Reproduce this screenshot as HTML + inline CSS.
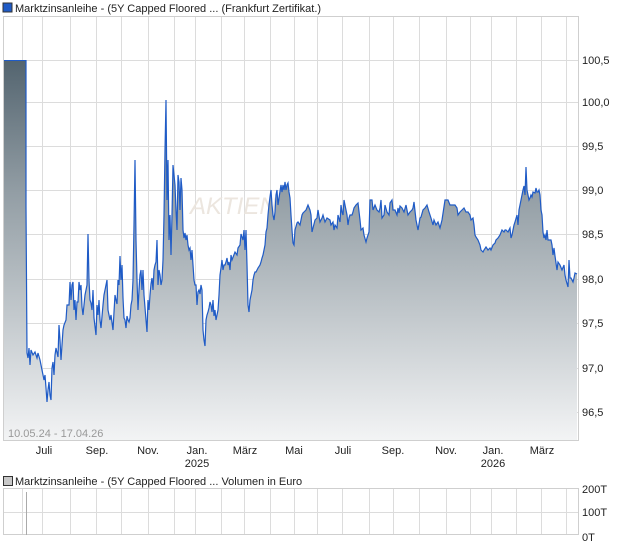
<!DOCTYPE html>
<html><head><meta charset="utf-8"><style>
html,body{margin:0;padding:0;background:#fff;}
body{width:620px;height:546px;overflow:hidden;font-family:"Liberation Sans",sans-serif;}
svg{display:block}
</style></head><body>
<svg width="620" height="546" viewBox="0 0 620 546" xmlns="http://www.w3.org/2000/svg" font-family="Liberation Sans, sans-serif">
<defs>
<linearGradient id="g" x1="0" y1="60" x2="0" y2="441" gradientUnits="userSpaceOnUse">
<stop offset="0" stop-color="#53646f"/>
<stop offset="0.35" stop-color="#939ea5"/>
<stop offset="1" stop-color="#f3f4f5"/>
</linearGradient>
</defs>
<rect x="3" y="3" width="9" height="9" fill="#1f5bc6" stroke="#333" stroke-width="1"/>
<text x="15" y="12" font-size="11" fill="#222">Marktzinsanleihe - (5Y Capped Floored ... (Frankfurt Zertifikat.)</text>
<g stroke="#dcdcdc" stroke-width="1">
<line x1="22.5" y1="16" x2="22.5" y2="441"/><line x1="42.5" y1="16" x2="42.5" y2="441"/><line x1="70.5" y1="16" x2="70.5" y2="441"/><line x1="96.5" y1="16" x2="96.5" y2="441"/><line x1="121.5" y1="16" x2="121.5" y2="441"/><line x1="148.5" y1="16" x2="148.5" y2="441"/><line x1="174.5" y1="16" x2="174.5" y2="441"/><line x1="195.5" y1="16" x2="195.5" y2="441"/><line x1="221.5" y1="16" x2="221.5" y2="441"/><line x1="244.5" y1="16" x2="244.5" y2="441"/><line x1="270.5" y1="16" x2="270.5" y2="441"/><line x1="294.5" y1="16" x2="294.5" y2="441"/><line x1="317.5" y1="16" x2="317.5" y2="441"/><line x1="342.5" y1="16" x2="342.5" y2="441"/><line x1="369.5" y1="16" x2="369.5" y2="441"/><line x1="393.5" y1="16" x2="393.5" y2="441"/><line x1="419.5" y1="16" x2="419.5" y2="441"/><line x1="446.5" y1="16" x2="446.5" y2="441"/><line x1="470.5" y1="16" x2="470.5" y2="441"/><line x1="491.5" y1="16" x2="491.5" y2="441"/><line x1="516.5" y1="16" x2="516.5" y2="441"/><line x1="541.5" y1="16" x2="541.5" y2="441"/><line x1="566.5" y1="16" x2="566.5" y2="441"/>
<line x1="3" y1="60.5" x2="578" y2="60.5"/><line x1="3" y1="102.5" x2="578" y2="102.5"/><line x1="3" y1="146.5" x2="578" y2="146.5"/><line x1="3" y1="190.5" x2="578" y2="190.5"/><line x1="3" y1="234.5" x2="578" y2="234.5"/><line x1="3" y1="279.5" x2="578" y2="279.5"/><line x1="3" y1="323.5" x2="578" y2="323.5"/><line x1="3" y1="368.5" x2="578" y2="368.5"/><line x1="3" y1="412.5" x2="578" y2="412.5"/>
</g>
<text x="190" y="214" font-size="24" fill="#ece6df" font-style="italic">AKTIEN</text>
<path id="p" fill="url(#g)" d="M3,441 L3,60 L26,60 L26,206 L27,353 L28,358 L29,348 L30,365 L31,350 L33,355 L35,352 L37,358 L38,353 L40,360 L41,365 L43,375 L44,380 L45,375 L46,388 L47,402 L48,390 L49,382 L50,395 L51,400 L52,368 L53,362 L54,375 L55,355 L56,348 L58,357 L59,325 L60,340 L61,360 L62,345 L63,330 L64,325 L66,320 L67,305 L69,305 L70,282 L71,300 L72,285 L73,282 L74,310 L75,300 L76,320 L77,302 L78,302 L79,282 L80,290 L81,285 L82,307 L83,315 L85,295 L86,290 L87,285 L88,234 L89,280 L90,300 L91,303 L92,310 L93,290 L94,318 L96,335 L97,305 L98,315 L99,300 L100,320 L101,328 L103,305 L104,295 L105,290 L106,285 L107,280 L108,310 L110,320 L111,315 L113,330 L114,312 L115,295 L116,300 L117,304 L118,280 L119,285 L120,256 L121,280 L122,265 L123,298 L124,318 L125,320 L126,328 L127,316 L128,320 L129,322 L130,318 L131,305 L132,300 L133,280 L134,225 L135,160 L136,240 L137,280 L138,310 L139,290 L140,275 L141,270 L142,290 L143,270 L144,295 L146,320 L147,332 L148,300 L149,310 L150,295 L151,284 L152,278 L153,290 L154,270 L155,265 L156,262 L157,240 L158,285 L159,270 L160,275 L161,285 L162,280 L163,260 L164,215 L165,150 L166,100 L167,200 L168,160 L169,240 L170,215 L171,255 L172,215 L173,165 L174,175 L175,185 L176,210 L177,230 L178,175 L179,182 L180,210 L181,178 L182,190 L183,230 L184,238 L185,233 L186,240 L187,235 L188,245 L189,250 L190,248 L191,260 L192,250 L193,265 L194,280 L195,285 L196,285 L197,305 L198,292 L199,290 L200,294 L201,285 L202,290 L203,330 L204,340 L205,346 L206,320 L207,315 L208,312 L209,308 L210,302 L211,305 L212,312 L213,300 L214,316 L215,310 L216,320 L217,315 L218,310 L219,295 L220,275 L221,268 L222,260 L223,270 L224,265 L225,265 L226,262 L227,258 L228,265 L229,262 L230,270 L231,255 L232,260 L235,252 L237,255 L238,248 L240,245 L241,234 L243,240 L244,230 L245,250 L246,230 L247,265 L248,305 L249,312 L250,300 L251,295 L252,290 L253,280 L254,275 L255,272 L256,272 L258,268 L260,265 L261,262 L262,258 L263,255 L264,250 L265,245 L266,232 L267,228 L268,215 L269,205 L270,197 L271,190 L272,205 L273,215 L274,220 L275,212 L276,195 L277,190 L278,205 L279,198 L281,185 L282,192 L283,185 L284,190 L285,182 L286,190 L287,185 L288,183 L289,192 L290,198 L291,215 L292,230 L293,243 L294,245 L295,230 L297,223 L298,222 L300,225 L302,215 L303,213 L304,212 L306,210 L308,205 L310,210 L311,215 L312,232 L313,228 L315,220 L317,218 L318,210 L320,222 L322,218 L323,215 L325,222 L326,220 L327,218 L330,220 L331,225 L333,222 L334,230 L335,225 L337,228 L338,215 L340,222 L341,205 L342,212 L343,215 L344,200 L346,210 L347,215 L348,225 L349,218 L350,215 L352,215 L353,212 L354,208 L356,205 L358,203 L360,220 L361,230 L363,228 L364,235 L366,242 L367,238 L369,232 L370,200 L372,200 L373,210 L375,205 L377,210 L379,212 L380,208 L381,200 L382,218 L384,215 L385,205 L387,212 L389,215 L390,203 L392,200 L393,210 L395,210 L397,215 L398,208 L399,213 L400,206 L402,208 L404,212 L406,205 L408,215 L410,212 L412,210 L413,208 L414,202 L416,220 L418,230 L420,218 L421,217 L423,210 L425,208 L427,205 L429,212 L431,218 L433,225 L434,220 L436,225 L438,222 L440,228 L442,220 L445,200 L448,200 L450,205 L453,205 L455,205 L457,208 L458,215 L460,212 L462,210 L464,208 L466,212 L468,212 L470,215 L471,220 L473,218 L474,225 L475,235 L476,237 L478,240 L480,245 L481,250 L483,252 L484,250 L486,247 L488,250 L490,248 L491,250 L493,245 L495,243 L496,240 L498,238 L500,235 L502,230 L504,232 L505,230 L506,230 L508,232 L510,228 L511,238 L512,235 L514,225 L515,222 L517,215 L518,225 L519,210 L520,205 L521,200 L522,195 L523,190 L524,186 L525,195 L526,167 L527,190 L528,195 L529,200 L530,198 L531,195 L532,197 L533,192 L535,193 L536,188 L537,192 L538,192 L539,190 L540,195 L541,210 L542,215 L543,232 L544,238 L545,235 L546,240 L547,230 L548,240 L549,240 L551,240 L552,245 L553,255 L554,248 L555,256 L557,270 L558,262 L560,265 L562,270 L564,265 L565,275 L566,280 L568,287 L569,260 L570,278 L571,278 L573,282 L574,278 L575,273 L577,274 L577,441 Z"/>
<path fill="none" stroke="#1f5bc6" stroke-width="1.2" d="M26,60 L26,206 L27,353 L28,358 L29,348 L30,365 L31,350 L33,355 L35,352 L37,358 L38,353 L40,360 L41,365 L43,375 L44,380 L45,375 L46,388 L47,402 L48,390 L49,382 L50,395 L51,400 L52,368 L53,362 L54,375 L55,355 L56,348 L58,357 L59,325 L60,340 L61,360 L62,345 L63,330 L64,325 L66,320 L67,305 L69,305 L70,282 L71,300 L72,285 L73,282 L74,310 L75,300 L76,320 L77,302 L78,302 L79,282 L80,290 L81,285 L82,307 L83,315 L85,295 L86,290 L87,285 L88,234 L89,280 L90,300 L91,303 L92,310 L93,290 L94,318 L96,335 L97,305 L98,315 L99,300 L100,320 L101,328 L103,305 L104,295 L105,290 L106,285 L107,280 L108,310 L110,320 L111,315 L113,330 L114,312 L115,295 L116,300 L117,304 L118,280 L119,285 L120,256 L121,280 L122,265 L123,298 L124,318 L125,320 L126,328 L127,316 L128,320 L129,322 L130,318 L131,305 L132,300 L133,280 L134,225 L135,160 L136,240 L137,280 L138,310 L139,290 L140,275 L141,270 L142,290 L143,270 L144,295 L146,320 L147,332 L148,300 L149,310 L150,295 L151,284 L152,278 L153,290 L154,270 L155,265 L156,262 L157,240 L158,285 L159,270 L160,275 L161,285 L162,280 L163,260 L164,215 L165,150 L166,100 L167,200 L168,160 L169,240 L170,215 L171,255 L172,215 L173,165 L174,175 L175,185 L176,210 L177,230 L178,175 L179,182 L180,210 L181,178 L182,190 L183,230 L184,238 L185,233 L186,240 L187,235 L188,245 L189,250 L190,248 L191,260 L192,250 L193,265 L194,280 L195,285 L196,285 L197,305 L198,292 L199,290 L200,294 L201,285 L202,290 L203,330 L204,340 L205,346 L206,320 L207,315 L208,312 L209,308 L210,302 L211,305 L212,312 L213,300 L214,316 L215,310 L216,320 L217,315 L218,310 L219,295 L220,275 L221,268 L222,260 L223,270 L224,265 L225,265 L226,262 L227,258 L228,265 L229,262 L230,270 L231,255 L232,260 L235,252 L237,255 L238,248 L240,245 L241,234 L243,240 L244,230 L245,250 L246,230 L247,265 L248,305 L249,312 L250,300 L251,295 L252,290 L253,280 L254,275 L255,272 L256,272 L258,268 L260,265 L261,262 L262,258 L263,255 L264,250 L265,245 L266,232 L267,228 L268,215 L269,205 L270,197 L271,190 L272,205 L273,215 L274,220 L275,212 L276,195 L277,190 L278,205 L279,198 L281,185 L282,192 L283,185 L284,190 L285,182 L286,190 L287,185 L288,183 L289,192 L290,198 L291,215 L292,230 L293,243 L294,245 L295,230 L297,223 L298,222 L300,225 L302,215 L303,213 L304,212 L306,210 L308,205 L310,210 L311,215 L312,232 L313,228 L315,220 L317,218 L318,210 L320,222 L322,218 L323,215 L325,222 L326,220 L327,218 L330,220 L331,225 L333,222 L334,230 L335,225 L337,228 L338,215 L340,222 L341,205 L342,212 L343,215 L344,200 L346,210 L347,215 L348,225 L349,218 L350,215 L352,215 L353,212 L354,208 L356,205 L358,203 L360,220 L361,230 L363,228 L364,235 L366,242 L367,238 L369,232 L370,200 L372,200 L373,210 L375,205 L377,210 L379,212 L380,208 L381,200 L382,218 L384,215 L385,205 L387,212 L389,215 L390,203 L392,200 L393,210 L395,210 L397,215 L398,208 L399,213 L400,206 L402,208 L404,212 L406,205 L408,215 L410,212 L412,210 L413,208 L414,202 L416,220 L418,230 L420,218 L421,217 L423,210 L425,208 L427,205 L429,212 L431,218 L433,225 L434,220 L436,225 L438,222 L440,228 L442,220 L445,200 L448,200 L450,205 L453,205 L455,205 L457,208 L458,215 L460,212 L462,210 L464,208 L466,212 L468,212 L470,215 L471,220 L473,218 L474,225 L475,235 L476,237 L478,240 L480,245 L481,250 L483,252 L484,250 L486,247 L488,250 L490,248 L491,250 L493,245 L495,243 L496,240 L498,238 L500,235 L502,230 L504,232 L505,230 L506,230 L508,232 L510,228 L511,238 L512,235 L514,225 L515,222 L517,215 L518,225 L519,210 L520,205 L521,200 L522,195 L523,190 L524,186 L525,195 L526,167 L527,190 L528,195 L529,200 L530,198 L531,195 L532,197 L533,192 L535,193 L536,188 L537,192 L538,192 L539,190 L540,195 L541,210 L542,215 L543,232 L544,238 L545,235 L546,240 L547,230 L548,240 L549,240 L551,240 L552,245 L553,255 L554,248 L555,256 L557,270 L558,262 L560,265 L562,270 L564,265 L565,275 L566,280 L568,287 L569,260 L570,278 L571,278 L573,282 L574,278 L575,273 L577,274"/>
<path fill="none" stroke="#1f5bc6" stroke-width="1" d="M3,60.5 L26,60.5"/>
<rect x="3.5" y="16.5" width="575" height="424" fill="none" stroke="#cfcfcf"/>
<g font-size="11" fill="#222">
<text x="582" y="64">100,5</text><text x="582" y="106">100,0</text><text x="582" y="150">99,5</text><text x="582" y="194">99,0</text><text x="582" y="238">98,5</text><text x="582" y="283">98,0</text><text x="582" y="327">97,5</text><text x="582" y="372">97,0</text><text x="582" y="416">96,5</text>
</g>
<text x="8" y="437" font-size="11" fill="#999">10.05.24 - 17.04.26</text>
<g font-size="11" fill="#222" text-anchor="middle">
<text x="44" y="454">Juli</text><text x="97" y="454">Sep.</text><text x="148" y="454">Nov.</text><text x="197" y="454">Jan.</text><text x="197" y="467">2025</text><text x="245" y="454">März</text><text x="294" y="454">Mai</text><text x="343" y="454">Juli</text><text x="393" y="454">Sep.</text><text x="446" y="454">Nov.</text><text x="493" y="454">Jan.</text><text x="493" y="467">2026</text><text x="542" y="454">März</text>
</g>
<rect x="3.5" y="476.5" width="9" height="9" fill="#c8c8c8" stroke="#333" stroke-width="1"/>
<text x="15" y="485" font-size="11" fill="#222">Marktzinsanleihe - (5Y Capped Floored ... Volumen in Euro</text>
<g stroke="#dcdcdc" stroke-width="1">
<line x1="22.5" y1="489" x2="22.5" y2="535"/><line x1="42.5" y1="489" x2="42.5" y2="535"/><line x1="70.5" y1="489" x2="70.5" y2="535"/><line x1="96.5" y1="489" x2="96.5" y2="535"/><line x1="121.5" y1="489" x2="121.5" y2="535"/><line x1="148.5" y1="489" x2="148.5" y2="535"/><line x1="174.5" y1="489" x2="174.5" y2="535"/><line x1="195.5" y1="489" x2="195.5" y2="535"/><line x1="221.5" y1="489" x2="221.5" y2="535"/><line x1="244.5" y1="489" x2="244.5" y2="535"/><line x1="270.5" y1="489" x2="270.5" y2="535"/><line x1="294.5" y1="489" x2="294.5" y2="535"/><line x1="317.5" y1="489" x2="317.5" y2="535"/><line x1="342.5" y1="489" x2="342.5" y2="535"/><line x1="369.5" y1="489" x2="369.5" y2="535"/><line x1="393.5" y1="489" x2="393.5" y2="535"/><line x1="419.5" y1="489" x2="419.5" y2="535"/><line x1="446.5" y1="489" x2="446.5" y2="535"/><line x1="470.5" y1="489" x2="470.5" y2="535"/><line x1="491.5" y1="489" x2="491.5" y2="535"/><line x1="516.5" y1="489" x2="516.5" y2="535"/><line x1="541.5" y1="489" x2="541.5" y2="535"/><line x1="566.5" y1="489" x2="566.5" y2="535"/>
<line x1="3" y1="512.5" x2="578" y2="512.5"/>
</g>
<rect x="3.5" y="488.5" width="575" height="46" fill="none" stroke="#cfcfcf"/>
<line x1="26.5" y1="492" x2="26.5" y2="535" stroke="#aaa"/>
<g font-size="11" fill="#222"><text x="582" y="493">200T</text><text x="582" y="516">100T</text><text x="582" y="541">0T</text></g>
</svg>
</body></html>
